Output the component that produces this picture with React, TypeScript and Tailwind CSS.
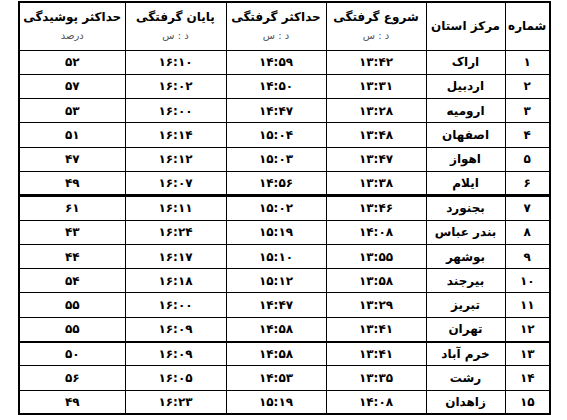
const rows: [string, string, string, string, string, string][] = [
  ["۱", "اراک", "۱۳:۴۲", "۱۴:۵۹", "۱۶:۱۰", "۵۲"],
  ["۲", "اردبیل", "۱۳:۳۱", "۱۴:۵۰", "۱۶:۰۲", "۵۷"],
  ["۳", "ارومیه", "۱۳:۲۸", "۱۴:۴۷", "۱۶:۰۰", "۵۳"],
  ["۴", "اصفهان", "۱۳:۴۸", "۱۵:۰۴", "۱۶:۱۴", "۵۱"],
  ["۵", "اهواز", "۱۳:۴۷", "۱۵:۰۳", "۱۶:۱۲", "۴۷"],
  ["۶", "ایلام", "۱۳:۳۸", "۱۴:۵۶", "۱۶:۰۷", "۴۹"],
  ["۷", "بجنورد", "۱۳:۴۶", "۱۵:۰۲", "۱۶:۱۱", "۶۱"],
  ["۸", "بندر عباس", "۱۴:۰۸", "۱۵:۱۹", "۱۶:۲۴", "۴۳"],
  ["۹", "بوشهر", "۱۳:۵۵", "۱۵:۱۰", "۱۶:۱۷", "۴۴"],
  ["۱۰", "بیرجند", "۱۳:۵۸", "۱۵:۱۲", "۱۶:۱۸", "۵۴"],
  ["۱۱", "تبریز", "۱۳:۲۹", "۱۴:۴۷", "۱۶:۰۰", "۵۵"],
  ["۱۲", "تهران", "۱۳:۴۱", "۱۴:۵۸", "۱۶:۰۹", "۵۵"],
  ["۱۳", "خرم آباد", "۱۳:۴۱", "۱۴:۵۸", "۱۶:۰۹", "۵۰"],
  ["۱۴", "رشت", "۱۳:۳۵", "۱۴:۵۳", "۱۶:۰۵", "۵۶"],
  ["۱۵", "زاهدان", "۱۴:۰۸", "۱۵:۱۹", "۱۶:۲۳", "۴۹"],
];

const widths = ["w-[45px]", "w-[79px]", "w-[100px]", "w-[100px]", "w-[101px]", "w-[106px]"];

const heads: [string, string][] = [
  ["شروع گرفتگی", "د : س"],
  ["حداکثر گرفتگی", "د : س"],
  ["پایان گرفتگی", "د : س"],
  ["حداکثر پوشیدگی", "درصد"],
];

export default function App() {
  return (
    <div className="w-[567px] h-[420px] bg-white pt-px pl-[18px] font-['DejaVu_Sans',sans-serif] text-black">
      <table dir="rtl" className="w-[532px] table-fixed border-collapse border-2 border-black">
        <colgroup>
          {widths.map((w, i) => (
            <col key={i} className={w} />
          ))}
        </colgroup>
        <thead>
          <tr className="h-[48px]">
            <th className="border-[1.5px] border-black text-[12px] font-bold whitespace-nowrap p-0">شماره</th>
            <th className="border-[1.5px] border-black text-[12px] font-bold whitespace-nowrap p-0">مرکز استان</th>
            {heads.map(([t, s]) => (
              <th key={t} className="border-[1.5px] border-black align-top pt-[5px] px-0 whitespace-nowrap">
                <div className="text-[12px] font-bold leading-[18px]">{t}</div>
                <div className="text-[10px] font-normal text-[#555] mt-[3px] leading-[13px]">{s}</div>
              </th>
            ))}
          </tr>
        </thead>
        <tbody>
          {rows.map((r, i) => (
            <tr
              key={r[0]}
              className={
                i === 5
                  ? "h-[24.3px] border-b-[3px] border-black"
                  : i === 11
                  ? "h-[24.3px] border-b-2 border-black"
                  : "h-[24.3px]"
              }
            >
              {r.map((c, j) => (
                <td
                  key={j}
                  className="border-x-[1.5px] border-t-[1.5px] border-black text-center text-[12px] leading-[16px] font-bold p-0 whitespace-nowrap"
                >
                  {c}
                </td>
              ))}
            </tr>
          ))}
        </tbody>
      </table>
    </div>
  );
}
